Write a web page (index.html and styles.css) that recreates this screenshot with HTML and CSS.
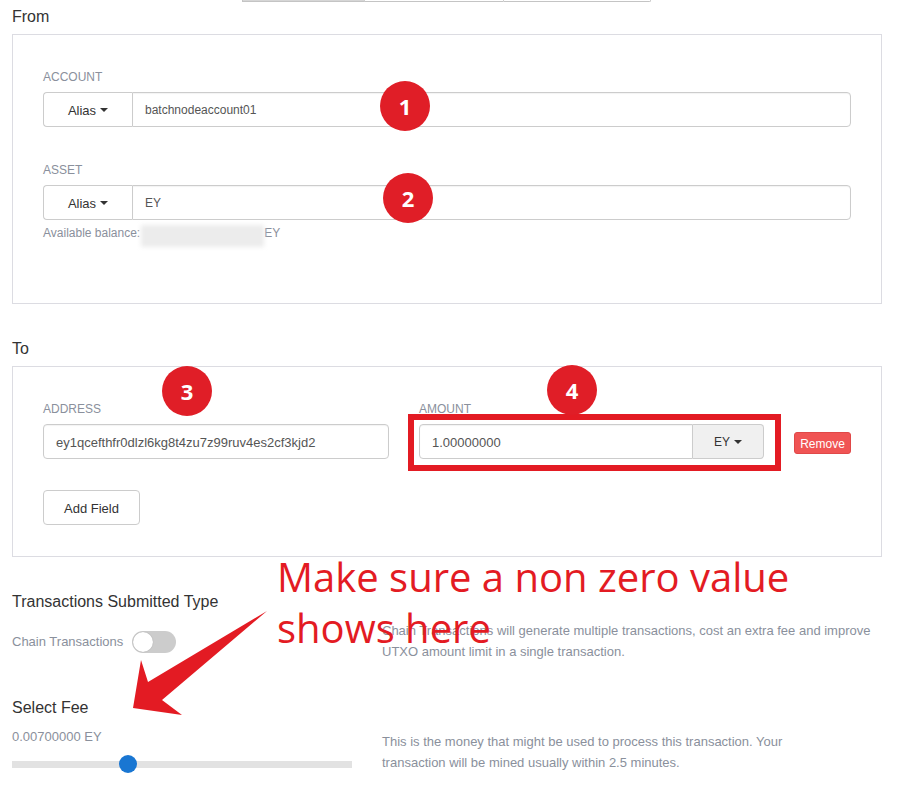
FILE: index.html
```html
<!DOCTYPE html>
<html>
<head>
<meta charset="utf-8">
<title>Send</title>
<link rel="stylesheet" href="styles.css">
</head>
<body>
<div class="page">
  <div class="tabs">
    <span class="tab tab-active"></span>
    <span class="tab tab-mid"></span>
    <span class="tab tab-last"></span>
  </div>

  <h2 class="section-title from-title">From</h2>
  <div class="panel panel-from">
    <div class="form-group">
      <label class="field-label">ACCOUNT</label>
      <div class="input-group">
        <button class="addon-btn">Alias <span class="caret"></span></button>
        <div class="input input-main text-12">batchnodeaccount01</div>
        <span class="badge badge-1">1</span>
      </div>
    </div>
    <div class="form-group asset-group">
      <label class="field-label">ASSET</label>
      <div class="input-group">
        <button class="addon-btn">Alias <span class="caret"></span></button>
        <div class="input input-main text-12">EY</div>
        <span class="badge badge-2">2</span>
      </div>
      <div class="help">Available balance:<span class="blur"></span>EY</div>
    </div>
  </div>

  <h2 class="section-title to-title">To</h2>
  <div class="panel panel-to">
    <div class="to-row">
      <div class="col col-address">
        <label class="field-label">ADDRESS</label>
        <div class="input input-single text-13">ey1qcefthfr0dlzl6kg8t4zu7z99ruv4es2cf3kjd2</div>
        <span class="badge badge-3">3</span>
      </div>
      <div class="col col-amount">
        <label class="field-label">AMOUNT</label>
        <div class="input-group amount-group">
          <div class="input input-amount text-13">1.00000000</div>
          <button class="addon-btn addon-grey">EY <span class="caret"></span></button>
          <span class="highlight-box"></span>
        </div>
        <span class="badge badge-4">4</span>
      </div>
      <div class="col col-remove">
        <button class="btn-remove">Remove</button>
      </div>
    </div>
    <button class="btn-add">Add Field</button>
  </div>

  <div class="options">
    <div class="opt-left">
      <h2 class="section-title">Transactions Submitted Type</h2>
      <div class="toggle-row">
        <span class="muted">Chain Transactions</span>
        <span class="toggle"><span class="knob"></span></span>
      </div>
      <h2 class="section-title fee-title">Select Fee</h2>
      <div class="fee-value muted">0.00700000 EY</div>
      <div class="slider">
        <div class="track"></div>
        <span class="thumb"></span>
      </div>
    </div>
    <div class="opt-right">
      <p class="desc desc-chain">Chain Transactions will generate multiple transactions, cost an extra fee and improve UTXO amount limit in a single transaction.</p>
      <p class="desc desc-fee">This is the money that might be used to process this transaction. Your transaction will be mined usually within 2.5 minutes.</p>
    </div>
  </div>

  <div class="annotation">Make sure a non zero value<br>shows here</div>
  <svg class="arrow" width="897" height="785" viewBox="0 0 897 785" aria-hidden="true">
    <polygon points="267,611 148,682 141,660 133,708 182,715 162,700" fill="#e31b23"/>
  </svg>
</div>
</body>
</html>
```

FILE: styles.css
```css
* { box-sizing: border-box; }
html, body { margin: 0; padding: 0; background: #fff; }
body {
  font-family: "Liberation Sans", Arial, sans-serif;
  color: #333;
}
.page {
  position: relative;
  width: 897px;
  height: 785px;
  overflow: hidden;
  padding: 0 15px 0 12px;
}

/* cut-off tab strip at top */
.tabs {
  display: flex;
  margin-left: 230px;
  width: 409px;
  height: 2px;
}
.tab {
  display: block;
  height: 2px;
  border-bottom: 1px solid #c4c4c4;
}
.tab-active { width: 122px; background: #d6d6d6; border-left: 1px solid #c4c4c4; }
.tab-mid { width: 139px; border-left: 1px solid #cfcfcf; }
.tab-last { width: 148px; border-left: 1px solid #cfcfcf; border-right: 1px solid #c4c4c4; border-bottom-right-radius: 3px; }

.section-title {
  margin: 0;
  font-size: 16px;
  font-weight: normal;
  line-height: 22px;
  color: #333;
}
.from-title { margin-top: 4px; }
.to-title { margin-top: 34px; }

.panel { border: 1px solid #dcdce2; }
.panel-from { margin-top: 6px; padding: 34px 30px 56px; }
.panel-to { margin-top: 6px; padding: 34px 30px 31px; }

.field-label {
  display: block;
  font-size: 12px;
  line-height: 17px;
  color: #8a909c;
  margin-bottom: 6px;
}
.asset-group { margin-top: 35px; }

.input-group {
  position: relative;
  display: flex;
  height: 35px;
}
.input {
  height: 35px;
  border: 1px solid #cccccc;
  background: #fff;
  color: #555;
  padding: 1px 12px 0;
  display: flex;
  align-items: center;
  box-shadow: inset 0 1px 1px rgba(0,0,0,0.05);
}
.text-12 { font-size: 12px; }
.text-13 { font-size: 13px; }
.input-main { flex: 1; border-radius: 0 4px 4px 0; }
.input-single { border-radius: 4px; }
.input-amount { flex: 1; border-radius: 4px 0 0 4px; }

.addon-btn {
  font-family: "Liberation Sans", Arial, sans-serif;
  font-size: 13px;
  color: #333;
  background: #fff;
  border: 1px solid #cccccc;
  border-right: none;
  border-radius: 4px 0 0 4px;
  width: 89px;
  height: 35px;
  padding: 1px 0 0;
  display: flex;
  align-items: center;
  justify-content: center;
  gap: 4px;
}
.addon-grey {
  width: 71px;
  font-size: 12px;
  background: #f0f0f0;
  border-right: 1px solid #cccccc;
  border-left: none;
  border-radius: 0 4px 4px 0;
}
.caret {
  display: inline-block;
  width: 0;
  height: 0;
  border-left: 4px solid transparent;
  border-right: 4px solid transparent;
  border-top: 4px solid #333;
}

.help {
  margin-top: 5px;
  font-size: 12px;
  line-height: 17px;
  color: #8a909c;
}
.blur {
  display: inline-block;
  vertical-align: top;
  width: 123px;
  height: 22px;
  margin-left: 1px;
  background: #ececec;
  filter: blur(2px);
}

.to-row {
  display: flex;
  gap: 30px;
}
.col { position: relative; }
.col-address { width: 346px; }
.col-amount { width: 345px; }
.col-remove { flex: 1; padding-top: 31px; }

.btn-remove {
  font-family: "Liberation Sans", Arial, sans-serif;
  font-size: 12px;
  color: #fff;
  background: #f05454;
  border: 1px solid #e04848;
  border-radius: 3px;
  height: 22px;
  width: 57px;
  padding: 1px 0 0;
}

.btn-add {
  display: block;
  margin-top: 31px;
  font-family: "Liberation Sans", Arial, sans-serif;
  font-size: 13px;
  color: #333;
  background: #fff;
  border: 1px solid #cccccc;
  border-radius: 4px;
  height: 35px;
  width: 97px;
  padding: 2px 0 0;
}

.highlight-box {
  position: absolute;
  left: -11px;
  top: -10px;
  width: 373px;
  height: 57px;
  border: 6px solid #e31b23;
}

.badge {
  position: absolute;
  width: 50px;
  height: 50px;
  border-radius: 50%;
  background: #e01e27;
  color: #fff;
  font-family: "Open Sans", "Noto Sans", sans-serif;
  font-weight: 700;
  font-size: 22px;
  display: flex;
  align-items: center;
  justify-content: center;
  z-index: 2;
}
.badge-1 { left: 337px; top: -11px; }
.badge-2 { left: 340px; top: -12px; }
.badge-3 { left: 119px; top: -35px; }
.badge-4 { left: 128px; top: -36px; }

.options {
  display: flex;
  gap: 30px;
  margin-top: 34px;
}
.opt-left { width: 340px; }
.opt-right { flex: 1; }
.muted { color: #8a909c; font-size: 13px; }

.toggle-row {
  margin-top: 18px;
  display: flex;
  align-items: center;
  gap: 9px;
  height: 22px;
  line-height: 22px;
}
.toggle {
  position: relative;
  display: block;
  width: 44px;
  height: 22px;
  border-radius: 11px;
  background: #cccccc;
}
.knob {
  position: absolute;
  left: 1px;
  top: 1px;
  width: 20px;
  height: 20px;
  border-radius: 50%;
  background: #fff;
  box-shadow: 0 0 1px rgba(0,0,0,0.3);
}

.fee-title { margin-top: 44px; }
.fee-value { margin-top: 8px; line-height: 20px; }
.slider {
  position: relative;
  margin-top: 8px;
  height: 18px;
  display: flex;
  align-items: center;
}
.track {
  width: 100%;
  height: 7px;
  background: #e2e2e2;
}
.thumb {
  position: absolute;
  left: 107px;
  top: 0;
  width: 18px;
  height: 18px;
  border-radius: 50%;
  background: #1976d2;
}

.desc {
  margin: 0;
  font-size: 13px;
  line-height: 21px;
  color: #8a909c;
}
.desc-chain { margin-top: 29px; }
.desc-fee { margin-top: 69px; max-width: 420px; }

.annotation {
  position: absolute;
  left: 277px;
  top: 551px;
  font-family: "Open Sans", "Noto Sans", sans-serif;
  font-size: 40px;
  line-height: 51px;
  color: #e31b23;
  white-space: nowrap;
  z-index: 3;
}
.arrow {
  position: absolute;
  left: 0;
  top: 0;
  z-index: 3;
  pointer-events: none;
}
```
